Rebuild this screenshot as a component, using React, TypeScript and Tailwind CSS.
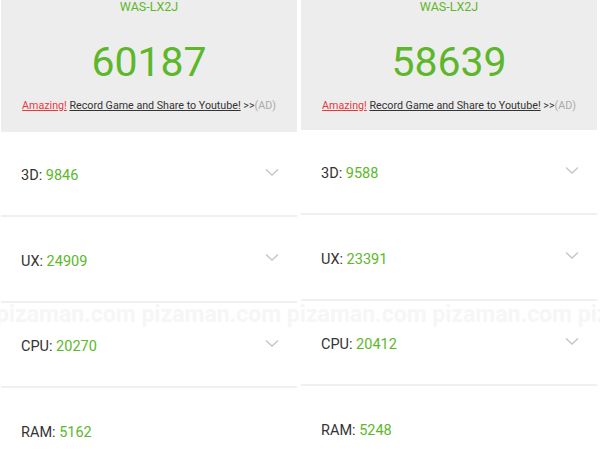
import React from "react";

type Row = { label: string; value: string; chevron: boolean };

function Chevron() {
  return (
    <svg width="14" height="9" viewBox="0 0 14 9" fill="none">
      <path d="M1 1.5 L7 7 L13 1.5" stroke="#c4c4c4" strokeWidth="1.3" />
    </svg>
  );
}

function Panel({
  score,
  rows,
  headerH,
}: {
  score: string;
  rows: Row[];
  headerH: string;
}) {
  return (
    <div className="flex w-[296px] shrink-0 flex-col bg-white">
      <div className={`flex ${headerH} shrink-0 flex-col items-center bg-[#eeeded]`}>
        <div className="mt-[0px] text-[12.5px] leading-[14px] text-[#5db829]">WAS-LX2J</div>
        <div className="mt-[26px] text-[41px] leading-[44px] text-[#5cb82a]">{score}</div>
        <div className="mt-[15px] text-[10.7px] leading-[14px] text-[#333]">
          <span className="text-[#e8383d] underline">Amazing!</span>{" "}
          <span className="underline">Record Game and Share to Youtube!</span>{" "}
          <span>&gt;&gt;</span>
          <span className="text-[#aaa]">(AD)</span>
        </div>
      </div>
      <div className="flex shrink-0 flex-col">
        {rows.map((r, i) => (
          <div
            key={r.label}
            className={`flex h-[85.3px] shrink-0 items-center justify-between pt-[5px] pl-[20px] pr-[18px] ${
              i < rows.length - 1 ? "border-b-2 border-[#f0f0f0]" : ""
            }`}
          >
            <div className="text-[14.5px] text-[#333]">
              {r.label}: <span className="text-[#5cb82a]">{r.value}</span>
            </div>
            {r.chevron && (
              <div className="mt-[-7px]">
                <Chevron />
              </div>
            )}
          </div>
        ))}
      </div>
    </div>
  );
}

export default function App() {
  return (
    <div
      className="relative flex h-[456px] w-[600px] justify-between overflow-hidden bg-white pr-[3px] pl-[1px]"
      style={{ fontFamily: "Roboto, 'Liberation Sans', sans-serif" }}
    >
      <Panel
        score="60187"
        headerH="h-[132px]"
        rows={[
          { label: "3D", value: "9846", chevron: true },
          { label: "UX", value: "24909", chevron: true },
          { label: "CPU", value: "20270", chevron: true },
          { label: "RAM", value: "5162", chevron: false },
        ]}
      />
      <Panel
        score="58639"
        headerH="h-[130px]"
        rows={[
          { label: "3D", value: "9588", chevron: true },
          { label: "UX", value: "23391", chevron: true },
          { label: "CPU", value: "20412", chevron: true },
          { label: "RAM", value: "5248", chevron: false },
        ]}
      />
      <div className="pointer-events-none absolute left-[-4px] top-[302px] whitespace-nowrap text-[23px] font-bold leading-[26px] text-[#f6f6f6]">
        pizaman.com pizaman.com pizaman.com pizaman.com pizaman.com
      </div>
    </div>
  );
}
